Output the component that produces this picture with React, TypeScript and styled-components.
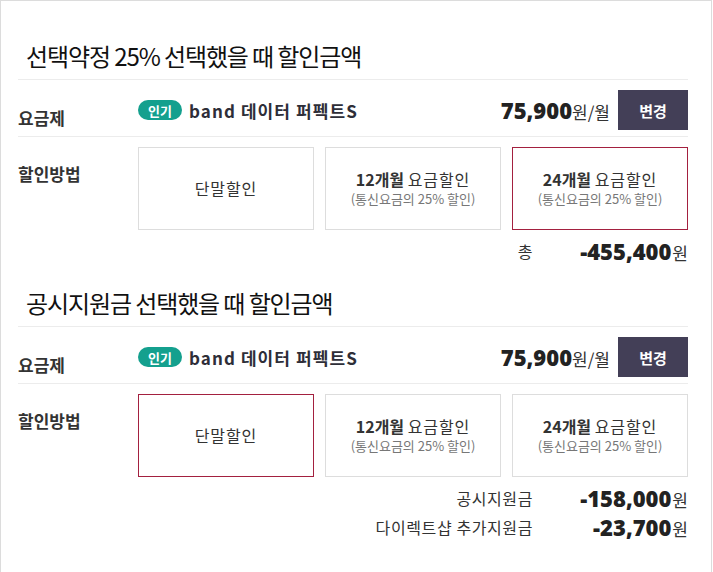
import React from "react";
import styled, { createGlobalStyle } from "styled-components";

const GlobalStyle = createGlobalStyle`
  html, body {
    margin: 0;
    padding: 0;
    background: #fff;
  }
  body {
    font-family: "Noto Sans CJK KR", "Noto Sans", sans-serif;
    color: #333;
  }
`;

type Option = { strong?: string; text: string; sub?: string };

const options: Option[] = [
  { text: "단말할인" },
  { strong: "12개월", text: "요금할인", sub: "(통신요금의 25% 할인)" },
  { strong: "24개월", text: "요금할인", sub: "(통신요금의 25% 할인)" },
];

export default function App() {
  return (
    <>
      <GlobalStyle />
      <Frame>
        <Section>
          <Title>선택약정 25% 선택했을 때 할인금액</Title>
          <PlanRow />
          <MethodRow selected={2} />
          <Summary>
            <SumLabel>총</SumLabel>
            <Amount>
              -455,400<Won>원</Won>
            </Amount>
          </Summary>
        </Section>
        <Section>
          <Title>공시지원금 선택했을 때 할인금액</Title>
          <PlanRow />
          <MethodRow selected={0} />
          <Summary>
            <SumLabel>공시지원금</SumLabel>
            <Amount>
              -158,000<Won>원</Won>
            </Amount>
            <SumLabel>다이렉트샵 추가지원금</SumLabel>
            <Amount>
              -23,700<Won>원</Won>
            </Amount>
          </Summary>
        </Section>
      </Frame>
    </>
  );
}

function PlanRow() {
  return (
    <Row>
      <Label>요금제</Label>
      <PlanName>
        <Badge>인기</Badge>
        <Name>band 데이터 퍼펙트S</Name>
      </PlanName>
      <Price>
        75,900<PriceUnit>원/월</PriceUnit>
      </Price>
      <ChangeButton>변경</ChangeButton>
    </Row>
  );
}

function MethodRow({ selected }: { selected: number }) {
  return (
    <MethodLine>
      <MethodLabel>할인방법</MethodLabel>
      <Choices>
        {options.map((o, i) => (
          <Choice key={i} $active={i === selected}>
            <ChoiceMain>
              {o.strong && <b>{o.strong} </b>}
              {o.text}
            </ChoiceMain>
            {o.sub && <ChoiceSub>{o.sub}</ChoiceSub>}
          </Choice>
        ))}
      </Choices>
    </MethodLine>
  );
}

const Frame = styled.div`
  box-sizing: border-box;
  width: 712px;
  min-height: 571px;
  border: 1px solid #dcdcdc;
  padding: 0 23px 30px 17px;
`;

const Section = styled.section`
  display: flex;
  flex-direction: column;
  & + & {
    margin-top: 20px;
  }
  &:first-child {
    padding-top: 38px;
  }
`;

const Title = styled.h2`
  margin: 0;
  padding: 0 0 6px 8px;
  font-size: 24px;
  line-height: 34px;
  font-weight: 400;
  color: #111;
  letter-spacing: -1.1px;
  border-bottom: 1px solid #ececec;
`;

const Row = styled.div`
  display: flex;
  align-items: center;
  padding: 10px 0 6px;
  border-bottom: 1px solid #ececec;
`;

const Label = styled.div`
  width: 120px;
  flex: none;
  padding-top: 16px;
  font-size: 17px;
  line-height: 24px;
  font-weight: 700;
  color: #333;
`;

const PlanName = styled.div`
  flex: 1;
  display: flex;
  align-items: center;
  gap: 7px;
`;

const Badge = styled.span`
  display: inline-flex;
  align-items: center;
  justify-content: center;
  height: 20px;
  padding: 0 10px;
  border-radius: 10px;
  background: #14a08e;
  color: #fff;
  font-size: 13px;
  font-weight: 700;
`;

const Name = styled.span`
  font-size: 17px;
  font-weight: 700;
  color: #2e2e38;
  letter-spacing: 1.1px;
`;

const Price = styled.div`
  font-family: "Open Sans", "Noto Sans CJK KR", sans-serif;
  font-size: 22px;
  font-weight: 800;
  color: #222;
  margin-right: 8px;
`;

const PriceUnit = styled.span`
  font-family: "Noto Sans CJK KR", sans-serif;
  font-size: 17px;
  font-weight: 400;
  color: #333;
`;

const ChangeButton = styled.button`
  width: 70px;
  height: 40px;
  border: 0;
  background: #433f57;
  color: #fff;
  font-family: "Noto Sans CJK KR", sans-serif;
  font-size: 15px;
  font-weight: 700;
`;

const MethodLine = styled.div`
  display: flex;
  align-items: flex-start;
  padding-top: 10px;
`;

const MethodLabel = styled(Label)`
  padding-top: 15px;
`;

const Choices = styled.div`
  flex: 1;
  display: grid;
  grid-template-columns: repeat(3, 1fr);
  gap: 11px;
`;

const Choice = styled.div<{ $active: boolean }>`
  box-sizing: border-box;
  height: 83px;
  display: flex;
  flex-direction: column;
  align-items: center;
  justify-content: center;
  border: 1px solid ${(p) => (p.$active ? "#a3203f" : "#dddddd")};
  color: #333;
`;

const ChoiceMain = styled.div`
  font-size: 16px;
  line-height: 21px;
  letter-spacing: 0.9px;
  b {
    font-weight: 700;
    letter-spacing: 0;
  }
`;

const ChoiceSub = styled.div`
  font-size: 13px;
  line-height: 18px;
  color: #777;
`;

const Summary = styled.div`
  display: grid;
  grid-template-columns: auto 150px;
  justify-content: end;
  align-items: center;
  column-gap: 5px;
  margin-top: 7px;
`;

const SumLabel = styled.div`
  text-align: right;
  font-size: 16px;
  color: #333;
  height: 29px;
  line-height: 29px;
  letter-spacing: 0.6px;
`;

const Amount = styled.div`
  display: flex;
  justify-content: flex-end;
  align-items: baseline;
  height: 29px;
  line-height: 29px;
  font-family: "Open Sans", "Noto Sans CJK KR", sans-serif;
  font-size: 22px;
  font-weight: 800;
  color: #222;
`;

const Won = styled.span`
  font-family: "Noto Sans CJK KR", sans-serif;
  font-size: 17px;
  font-weight: 400;
  color: #333;
  margin-left: 1px;
`;
